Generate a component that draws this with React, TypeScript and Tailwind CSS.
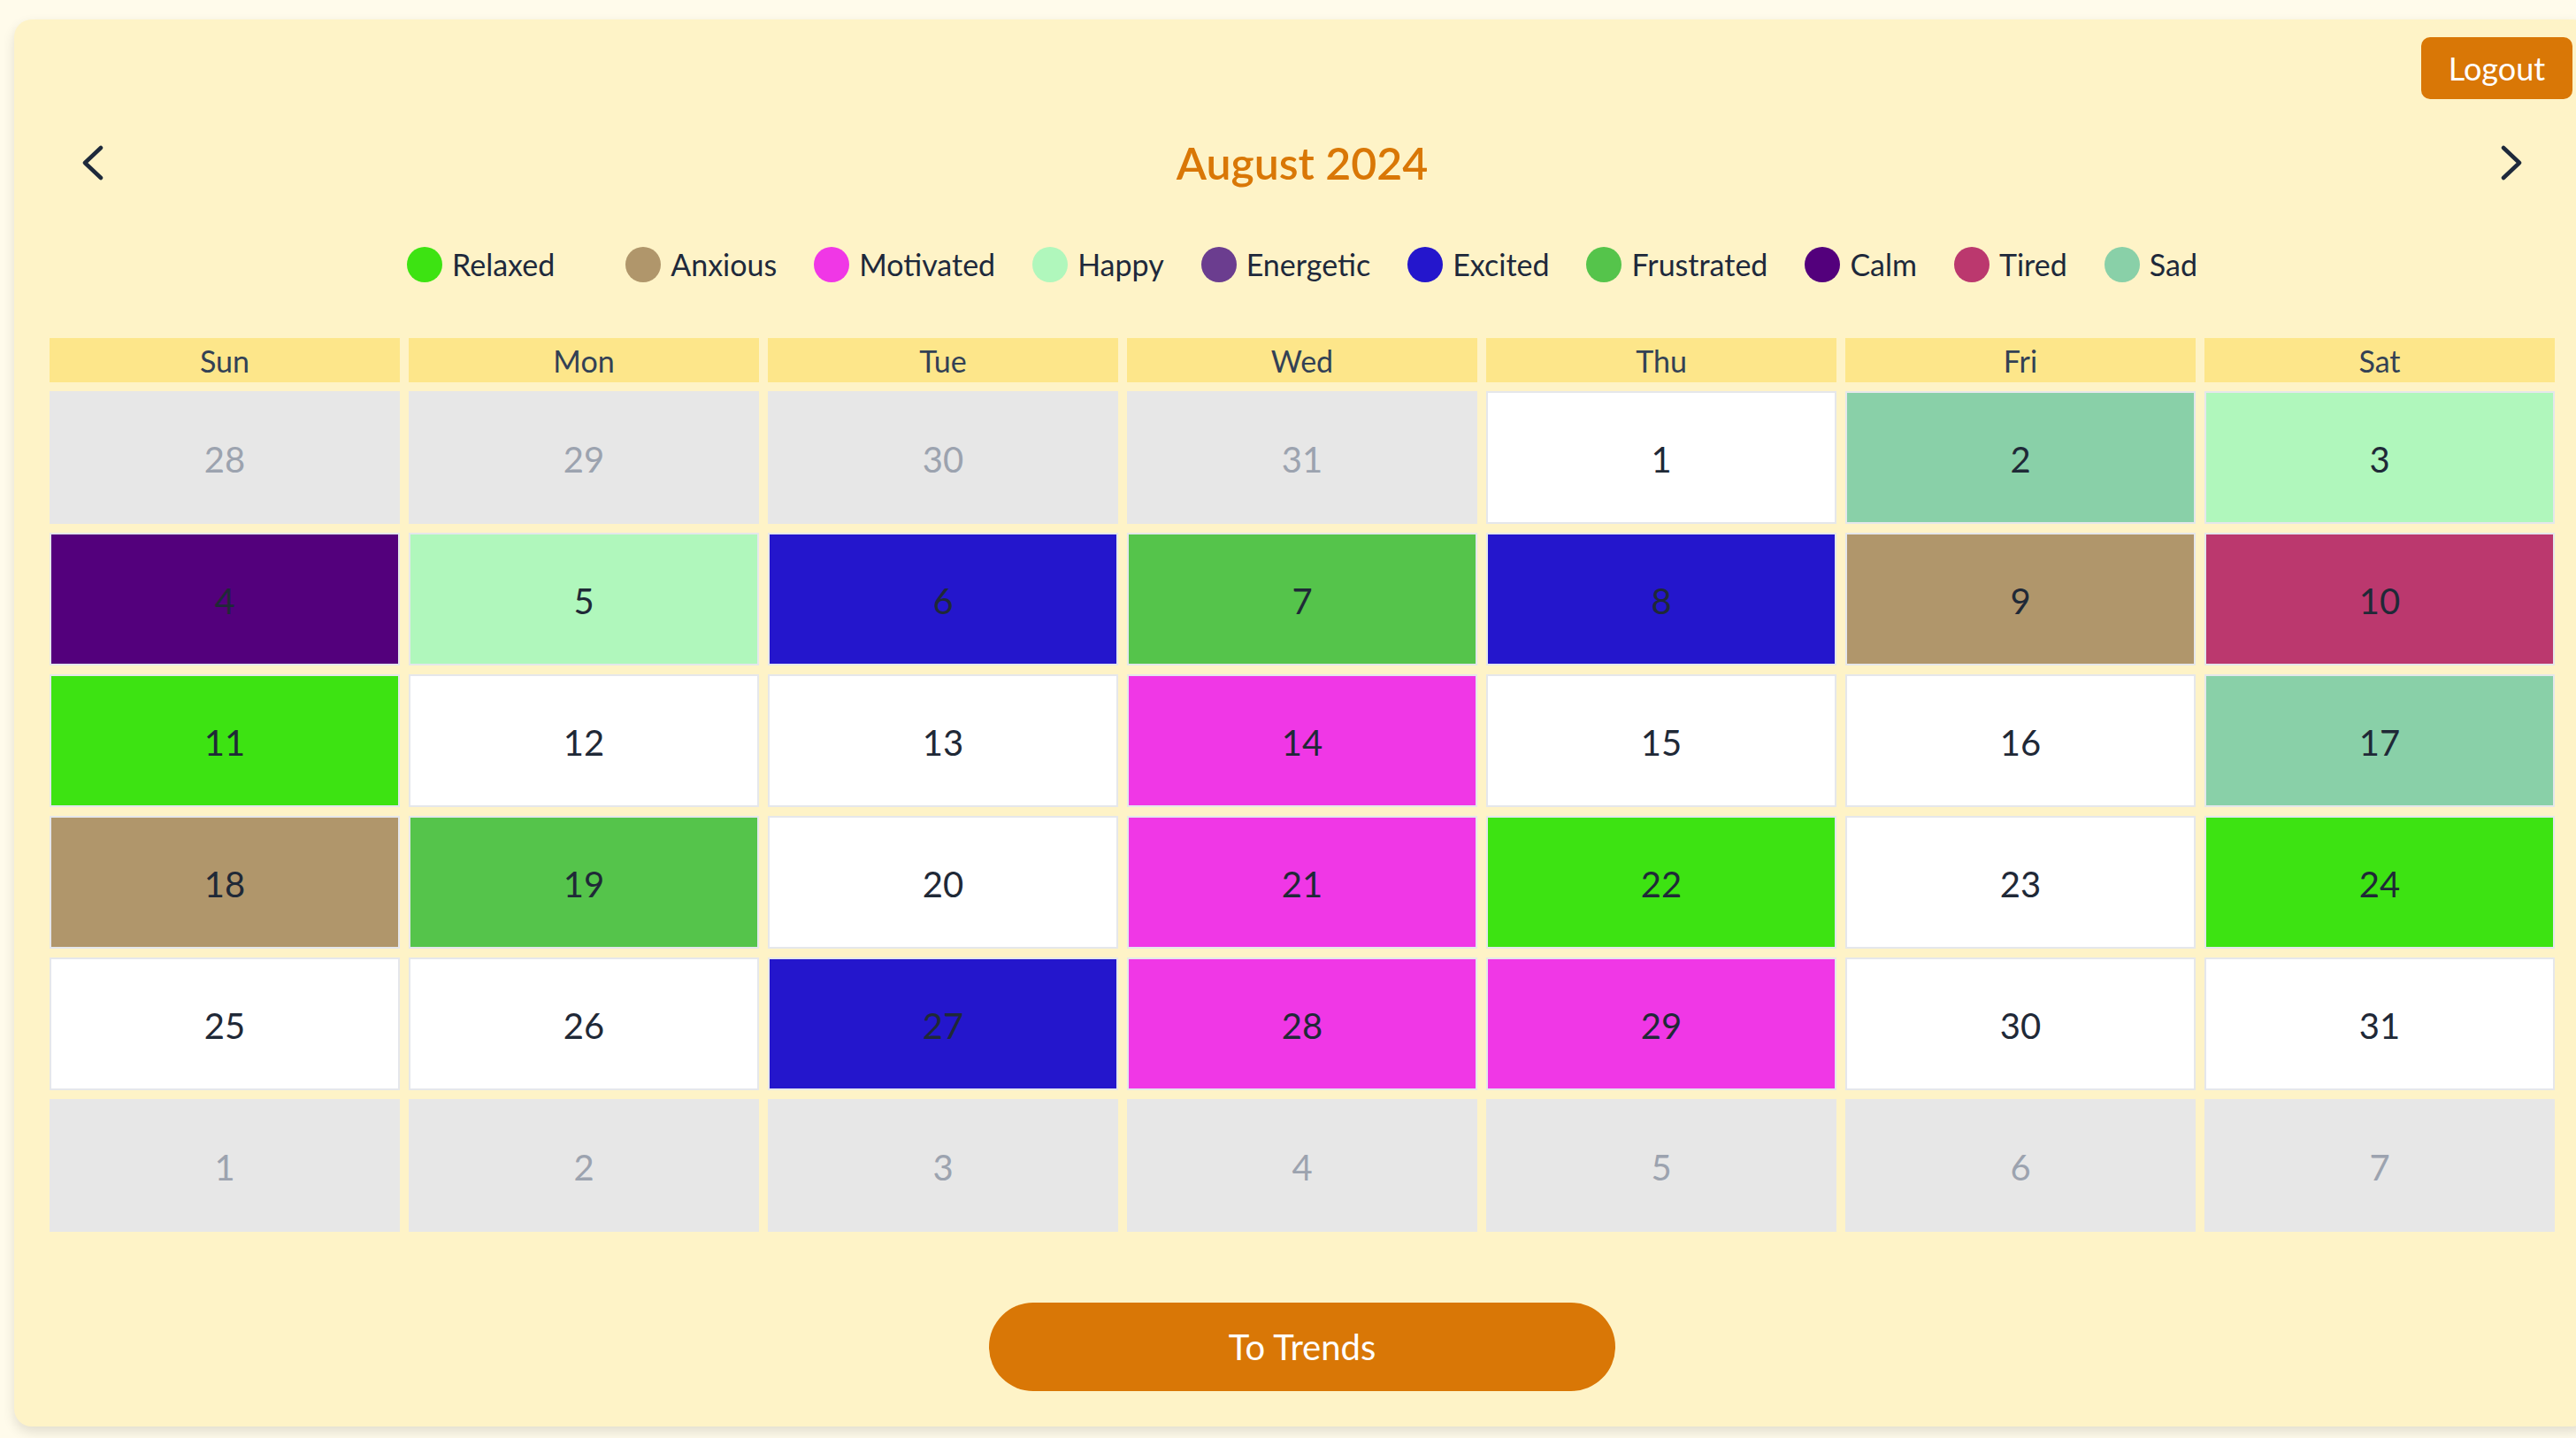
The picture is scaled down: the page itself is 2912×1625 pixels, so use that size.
import React from "react";

type Mood = { name: string; color: string };

const MOODS: Mood[] = [
  { name: "Relaxed", color: "#3de312" },
  { name: "Anxious", color: "#b0966b" },
  { name: "Motivated", color: "#f037e6" },
  { name: "Happy", color: "#b0f7bc" },
  { name: "Energetic", color: "#6b3d8f" },
  { name: "Excited", color: "#2416cc" },
  { name: "Frustrated", color: "#55c44b" },
  { name: "Calm", color: "#53007c" },
  { name: "Tired", color: "#bb386e" },
  { name: "Sad", color: "#89d0a8" },
];

const C: Record<string, string> = Object.fromEntries(MOODS.map((m) => [m.name, m.color]));

type Cell = { day: number; outside?: boolean; mood?: string };

const o = (d: number): Cell => ({ day: d, outside: true });
const w = (d: number, mood?: string): Cell => ({ day: d, mood });

const CELLS: Cell[] = [
  o(28), o(29), o(30), o(31), w(1), w(2, "Sad"), w(3, "Happy"),
  w(4, "Calm"), w(5, "Happy"), w(6, "Excited"), w(7, "Frustrated"), w(8, "Excited"), w(9, "Anxious"), w(10, "Tired"),
  w(11, "Relaxed"), w(12), w(13), w(14, "Motivated"), w(15), w(16), w(17, "Sad"),
  w(18, "Anxious"), w(19, "Frustrated"), w(20), w(21, "Motivated"), w(22, "Relaxed"), w(23), w(24, "Relaxed"),
  w(25), w(26), w(27, "Excited"), w(28, "Motivated"), w(29, "Motivated"), w(30), w(31),
  o(1), o(2), o(3), o(4), o(5), o(6), o(7),
];

const DAYS = ["Sun", "Mon", "Tue", "Wed", "Thu", "Fri", "Sat"];

function Chevron({ dir }: { dir: "left" | "right" }) {
  return (
    <svg width="24" height="40" viewBox="0 0 24 40" fill="none" className="block">
      <polyline
        points={dir === "left" ? "21,3 3,20 21,37" : "3,3 21,20 3,37"}
        stroke="#1e293b"
        strokeWidth="4.5"
        strokeLinecap="round"
        strokeLinejoin="round"
      />
    </svg>
  );
}

export default function App() {
  return (
    <div
      className="min-h-screen w-full overflow-hidden bg-[#fffbeb] pt-[22px] pl-[16px]"
      style={{ fontFamily: "Lato, 'Noto Sans', sans-serif" }}
    >
      <div className="w-[2912px] rounded-[20px] bg-[#fef3c7] px-[40px] pb-[40px] pt-[20px] shadow-[0_6px_14px_rgba(0,0,0,0.12)]">
        <div className="-mr-[20px] flex justify-end">
          <button className="h-[70px] w-[171px] rounded-[10px] bg-[#d97706] text-[36px] leading-none text-white">
            Logout
          </button>
        </div>

        <div className="mt-[42px] flex h-[60px] items-center justify-between px-[37px]">
          <Chevron dir="left" />
          <div className="text-[50px] font-semibold leading-none text-[#d97706]">August 2024</div>
          <Chevron dir="right" />
        </div>

        <div className="mt-[65px] flex items-center justify-center gap-[42px]">
          {MOODS.map((m, i) => (
            <div key={m.name} className={`flex items-center gap-[11px] ${i === 0 ? "mr-[38px]" : ""}`}>
              <span className="block h-[40px] w-[40px] rounded-full" style={{ backgroundColor: m.color }} />
              <span className="text-[34px] leading-none text-[#1e293b]">{m.name}</span>
            </div>
          ))}
        </div>

        <div className="mt-[63px] grid grid-cols-7 gap-[10px]">
          {DAYS.map((d) => (
            <div
              key={d}
              className="flex h-[50px] items-center justify-center bg-[#fde68a] pt-[2px] text-[34px] leading-none text-[#334155]"
            >
              {d}
            </div>
          ))}
          {CELLS.map((c, i) =>
            c.outside ? (
              <div
                key={i}
                className="flex h-[150px] items-center justify-center bg-[#e7e7e7] pt-[3px] text-[40px] leading-none text-[#9ca3af]"
              >
                {c.day}
              </div>
            ) : (
              <div
                key={i}
                className="flex h-[150px] items-center justify-center border-2 border-[#e5e7eb] pt-[3px] text-[40px] leading-none text-[#1f2937]"
                style={{ backgroundColor: c.mood ? C[c.mood] : "#ffffff" }}
              >
                {c.day}
              </div>
            )
          )}
        </div>

        <div className="mt-[80px] flex justify-center">
          <button className="h-[100px] w-[708px] rounded-full bg-[#d97706] text-[40px] leading-none text-white">
            To Trends
          </button>
        </div>
      </div>
    </div>
  );
}
